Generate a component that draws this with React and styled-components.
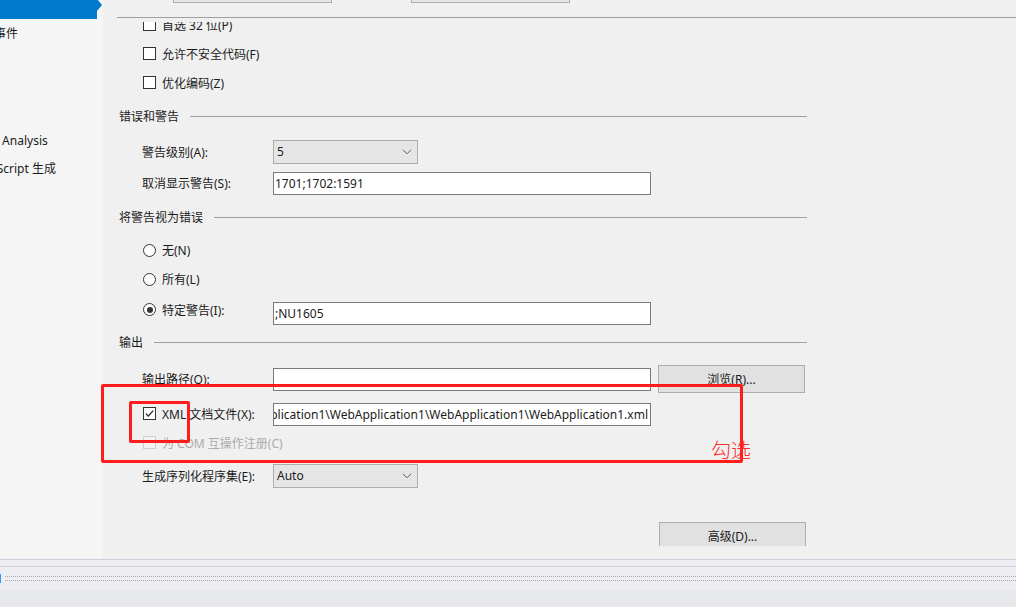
import styled, { createGlobalStyle } from "styled-components";

const GlobalStyle = createGlobalStyle`
  html, body {
    margin: 0;
    padding: 0;
    background: #f0f0f0;
  }
  body {
    font-family: "Noto Sans", "Noto Sans CJK SC", sans-serif;
    font-size: 12px;
    color: #1b1b1b;
  }
`;

const navItems = [
  { label: "生成", selected: true },
  { label: "生成事件" },
  { label: "调试" },
  { label: "资源" },
  { label: "设置" },
  { label: "Code Analysis" },
  { label: "TypeScript 生成" },
];

const Check = ({ checked, disabled }) => (
  <CheckBox $disabled={disabled}>
    {checked && (
      <svg width="11" height="11" viewBox="0 0 11 11">
        <path d="M1.8 5.6 L4.3 8.1 L9.2 2.6" fill="none" stroke="#222" strokeWidth="1.3" />
      </svg>
    )}
  </CheckBox>
);

const Chevron = () => (
  <svg width="10" height="6" viewBox="0 0 10 6">
    <path d="M1 0.8 L5 4.8 L9 0.8" fill="none" stroke="#5a5a5a" strokeWidth="1" />
  </svg>
);

const App = () => {
  return (
    <Window>
      <GlobalStyle />
      <Body>
        <Sidebar>
          <NavList>
            {navItems.map((item) => (
              <NavItem key={item.label} $selected={item.selected}>
                <NavLabel>{item.label}</NavLabel>
              </NavItem>
            ))}
          </NavList>
        </Sidebar>

        <Main>
          <TopStrip>
            <StubBox $left={56} />
            <StubBox $left={79} />
          </TopStrip>

          <Viewport>
            <Content>
              <CheckRow>
                <Check />
                <span>首选 32 位(P)</span>
              </CheckRow>
              <CheckRow>
                <Check />
                <span>允许不安全代码(F)</span>
              </CheckRow>
              <CheckRow>
                <Check />
                <span>优化编码(Z)</span>
              </CheckRow>

              <SectionHeader $h={38}>
                <span>错误和警告</span>
                <Rule />
              </SectionHeader>

              <FieldRow $h={33}>
                <Label>警告级别(A):</Label>
                <Select>
                  <span>5</span>
                  <Chevron />
                </Select>
              </FieldRow>
              <FieldRow $h={30}>
                <Label>取消显示警告(S):</Label>
                <TextBox>1701;1702:1591</TextBox>
              </FieldRow>

              <SectionHeader $h={38}>
                <span>将警告视为错误</span>
                <Rule />
              </SectionHeader>

              <FieldRow $h={28}>
                <RadioLabel>
                  <Radio />
                  <span>无(N)</span>
                </RadioLabel>
              </FieldRow>
              <FieldRow $h={30}>
                <RadioLabel>
                  <Radio />
                  <span>所有(L)</span>
                </RadioLabel>
              </FieldRow>
              <FieldRow $h={39}>
                <Label>
                  <RadioLabel $raise>
                    <Radio $checked />
                    <span>特定警告(I):</span>
                  </RadioLabel>
                </Label>
                <TextBox>;NU1605</TextBox>
              </FieldRow>

              <SectionHeader $h={18}>
                <span>输出</span>
                <Rule />
              </SectionHeader>

              <FieldRow $h={28} $mt={14}>
                <Label>输出路径(O):</Label>
                <TextBox />
                <Button>浏览(R)...</Button>
              </FieldRow>
              <FieldRow $h={28} $mt={7}>
                <Label>
                  <CheckLabel>
                    <Check checked />
                    <span>XML 文档文件(X):</span>
                  </CheckLabel>
                </Label>
                <TextBox $end>
                  <span>bin\Debug\WebApplication1\WebApplication1\WebApplication1\WebApplication1.xml</span>
                </TextBox>
              </FieldRow>
              <FieldRow $h={29}>
                <CheckLabel $disabled>
                  <Check disabled />
                  <span>为 COM 互操作注册(C)</span>
                </CheckLabel>
              </FieldRow>
              <FieldRow $h={37}>
                <Label>生成序列化程序集(E):</Label>
                <Select>
                  <span>Auto</span>
                  <Chevron />
                </Select>
              </FieldRow>

              <ButtonRow>
                <Button $tall>高级(D)...</Button>
              </ButtonRow>
            </Content>
          </Viewport>
        </Main>
      </Body>

      <StatusArea>
        <Band />
        <GripRow>
          <Caret />
          <Grip />
        </GripRow>
        <Floor />
      </StatusArea>

      <Mark $x={101} $y={384} $w={642} $h={79} />
      <Mark $x={129} $y={401} $w={61} $h={42} />
      <Note>勾选</Note>
    </Window>
  );
};

const Window = styled.div`
  position: relative;
  width: 1016px;
  height: 607px;
  overflow: hidden;
  display: flex;
  flex-direction: column;
`;

const Body = styled.div`
  display: flex;
  height: 559px;
`;

const Sidebar = styled.div`
  width: 103px;
  flex-shrink: 0;
  background: #f5f5f5;
`;

const NavList = styled.ul`
  list-style: none;
  margin: -8px 0 0;
  padding: 0;
`;

const NavItem = styled.li`
  position: relative;
  height: 27px;
  width: 97px;
  display: flex;
  align-items: center;
  white-space: nowrap;
  color: ${(p) => (p.$selected ? "#fff" : "#1b1b1b")};
  background: ${(p) => (p.$selected ? "#007acc" : "transparent")};

  ${(p) =>
    p.$selected &&
    `
    &::after {
      content: "";
      position: absolute;
      right: -5px;
      top: 7px;
      border-left: 5px solid #007acc;
      border-top: 6px solid transparent;
      border-bottom: 6px solid transparent;
    }
  `}
`;

const NavLabel = styled.span`
  margin-left: -30px;
`;

const Main = styled.div`
  flex: 1;
  display: flex;
  flex-direction: column;
  background: #f0f0f0;
  min-width: 0;
`;

const TopStrip = styled.div`
  height: 17px;
  margin-left: 14px;
  border-bottom: 1px solid #a0a0a0;
  display: flex;
  align-items: flex-start;
`;

const StubBox = styled.div`
  width: 157px;
  height: 2px;
  margin-left: ${(p) => p.$left}px;
  border: 1px solid #adadad;
  border-top: none;
  background: #e5e5e5;
`;

const Viewport = styled.div`
  margin-top: 4px;
  height: 524px;
  overflow: hidden;
`;

const Content = styled.div`
  margin-top: -12px;
  padding: 0 209px 0 16px;
  display: flex;
  flex-direction: column;
`;

const CheckRow = styled.div`
  height: 29px;
  padding-left: 24px;
  display: flex;
  align-items: center;
  gap: 6px;
`;

const CheckBox = styled.span`
  width: 11px;
  height: 11px;
  flex-shrink: 0;
  display: inline-flex;
  align-items: center;
  justify-content: center;
  border: 1px solid ${(p) => (p.$disabled ? "#cfcfcf" : "#333")};
  background: ${(p) => (p.$disabled ? "#f3f3f3" : "#fff")};
`;

const CheckLabel = styled.span`
  display: inline-flex;
  align-items: center;
  gap: 6px;
  padding-left: 1px;
  white-space: nowrap;
  color: ${(p) => (p.$disabled ? "#ababab" : "inherit")};
`;

const SectionHeader = styled.div`
  height: ${(p) => p.$h}px;
  display: flex;
  align-items: center;
  gap: 11px;
  white-space: nowrap;
`;

const Rule = styled.div`
  flex: 1;
  height: 1px;
  background: #a0a0a0;
`;

const FieldRow = styled.div`
  height: ${(p) => p.$h}px;
  margin-top: ${(p) => p.$mt || 0}px;
  padding-left: 23px;
  display: flex;
  align-items: center;
`;

const Label = styled.div`
  width: 131px;
  flex-shrink: 0;
  white-space: nowrap;
`;

const RadioLabel = styled.span`
  display: inline-flex;
  align-items: center;
  gap: 6px;
  padding-left: 1px;
  margin-bottom: ${(p) => (p.$raise ? "9px" : "0")};
`;

const Radio = styled.span`
  width: 11px;
  height: 11px;
  border-radius: 50%;
  border: 1px solid #333;
  background: #fff;
  display: inline-flex;
  align-items: center;
  justify-content: center;

  &::after {
    content: "";
    display: ${(p) => (p.$checked ? "block" : "none")};
    width: 6px;
    height: 6px;
    border-radius: 50%;
    background: #333;
  }
`;

const Select = styled.div`
  width: 138px;
  height: 22px;
  border: 1px solid #adadad;
  background: #e5e5e5;
  display: flex;
  align-items: center;
  justify-content: space-between;
  padding: 0 5px 0 0;

  span {
    padding-left: 3px;
  }
`;

const TextBox = styled.div`
  width: 373px;
  height: 21px;
  border: 1px solid #7a7a7a;
  background: #fff;
  display: flex;
  align-items: center;
  justify-content: ${(p) => (p.$end ? "flex-end" : "flex-start")};
  padding: 0 2px 0 1px;
  overflow: hidden;
  white-space: nowrap;
  flex-shrink: 0;
`;

const Button = styled.div`
  width: 145px;
  height: ${(p) => (p.$tall ? 25 : 26)}px;
  margin-left: 7px;
  border: 1px solid #adadad;
  background: #e1e1e1;
  display: flex;
  align-items: center;
  justify-content: center;
  flex-shrink: 0;
`;

const ButtonRow = styled.div`
  margin-top: 28px;
  padding-left: 533px;
  display: flex;
`;

const StatusArea = styled.div`
  flex: 1;
  display: flex;
  flex-direction: column;
  background: #eeeef2;
  border-top: 1px solid #cccedb;
`;

const Band = styled.div`
  height: 6px;
  border-bottom: 1px solid #cccedb;
`;

const GripRow = styled.div`
  height: 23px;
  display: flex;
  align-items: center;
`;

const Caret = styled.div`
  width: 1px;
  height: 9px;
  background: #3399ff;
`;

const Grip = styled.div`
  flex: 1;
  margin-left: 4px;
  height: 3px;
  border-top: 1px dotted #a9a9b0;
  border-bottom: 1px dotted #a9a9b0;
`;

const Floor = styled.div`
  flex: 1;
  background: #e7e8ec;
`;

const Mark = styled.div`
  position: absolute;
  left: ${(p) => p.$x}px;
  top: ${(p) => p.$y}px;
  width: ${(p) => p.$w}px;
  height: ${(p) => p.$h}px;
  box-sizing: border-box;
  border: 3px solid #ff1c1c;
  border-radius: 2px;
  pointer-events: none;
`;

const Note = styled.div`
  position: absolute;
  left: 711px;
  top: 436px;
  color: #ff2a2a;
  font-family: "Noto Sans CJK SC", sans-serif;
  font-size: 20px;
  line-height: 28px;
  font-weight: 300;
`;

export default App;
